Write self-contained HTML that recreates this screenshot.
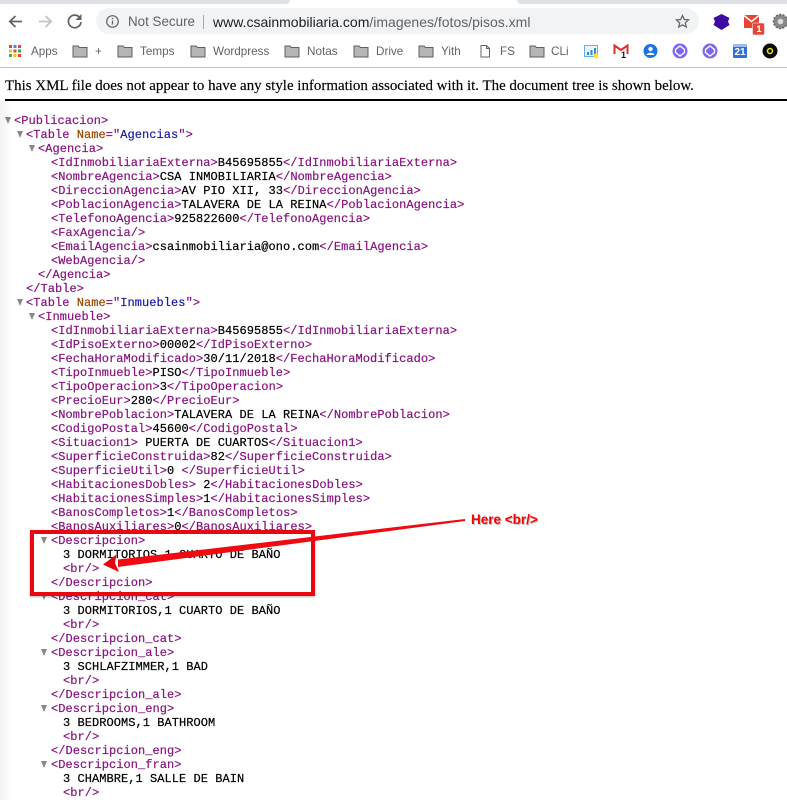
<!DOCTYPE html>
<html><head><meta charset="utf-8">
<style>
html,body{margin:0;padding:0;background:#fff}
#r{position:relative;width:787px;height:800px;overflow:hidden;background:#fff}
.a{position:absolute}
.u{font:13.4px/18px "Liberation Sans",sans-serif;white-space:nowrap}
.b{position:absolute;top:44px;font:11.7px/16px "Liberation Sans",sans-serif;color:#5f6368;white-space:nowrap}
.x{position:absolute;left:0;margin-top:1px;font:12px/14px "Liberation Mono",monospace;letter-spacing:.05px;-webkit-text-stroke:.2px;color:#881280;white-space:pre;height:14px}
.x b{font-weight:normal;color:#000}
.x i{font-style:normal;color:#994500}
.x u{text-decoration:none;color:#1a1aa6}
.t{position:absolute;width:0;height:0;border-left:3.5px solid transparent;border-right:3.5px solid transparent;border-top:7px solid #888}
svg{position:absolute;overflow:visible}
</style></head><body><div id="r">
<div class="a" style="left:0;top:100px;width:12px;height:700px;background:linear-gradient(90deg,#f3f3f3,#fff)"></div>
<div class="a" style="left:0;top:0;width:290px;height:4px;background:#dee1e6;border-radius:0 0 6px 0"></div>
<div class="a" style="left:517px;top:0;width:270px;height:4px;background:#dee1e6;border-radius:0 0 0 6px"></div>
<div class="a" style="left:96px;top:8px;width:603px;height:26px;border-radius:13px;background:#f1f3f4"></div>
<svg style="left:0;top:0" width="787" height="70" fill="none">
<path d="M22 21.500H10M15.500 16 9.800 21.500l5.700 5.500" stroke="#5f6368" stroke-width="1.700"/>
<path d="M39 21.500h12M45.500 16 51.200 21.500l-5.700 5.500" stroke="#bfc2c6" stroke-width="1.700"/>
<path d="M80 18a6.300 6.300 0 1 0 1 4" stroke="#5f6368" stroke-width="1.700"/><path d="M81.500 14v6h-6z" fill="#5f6368"/>
<circle cx="112.500" cy="21.500" r="5.800" stroke="#5f6368" stroke-width="1.200"/><path d="M112.500 20.500v4M112.500 18v1.300" stroke="#5f6368" stroke-width="1.300"/>
<path d="M682.500 15.500l1.800 4 4.300.4-3.300 2.900 1 4.200-3.800-2.200-3.800 2.200 1-4.200-3.300-2.900 4.300-.4z" stroke="#5f6368" stroke-width="1.200"/>
<path d="M721.500 14l8 4-1.500 3.500 1.500 3.500-8 5-8-5 1.500-3.500-1.500-3.500z" fill="#3a0ca3"/>
<path d="M744 15h15v13h-15z" fill="#ea4335"/><path d="M744 15.500l7.500 6 7.500-6" stroke="#fff" stroke-width="1.500"/>
<rect x="752.500" y="23" width="12" height="12" rx="1.500" fill="#e0483c" stroke="#fff" stroke-width=".5"/>
<circle cx="780.500" cy="21.500" r="7" fill="#8a8a8a"/><circle cx="780.500" cy="21.500" r="7" stroke="#666" stroke-width="1.500" stroke-dasharray="2 1.500"/><circle cx="780.500" cy="21.500" r="2.800" fill="#ddd"/>
<rect x="9" y="45" width="3" height="3" fill="#ea4335"/><rect x="18" y="45" width="3" height="3" fill="#ea4335"/>
<rect x="13.500" y="45" width="3" height="3" fill="#4285f4"/>
<rect x="9" y="49.500" width="3" height="3" fill="#fbbc05"/><rect x="13.500" y="49.500" width="3" height="3" fill="#ea4335"/><rect x="18" y="49.500" width="3" height="3" fill="#34a853"/>
<rect x="9" y="54" width="3" height="3" fill="#34a853"/><rect x="13.500" y="54" width="3" height="3" fill="#fbbc05"/><rect x="18" y="54" width="3" height="3" fill="#ea4335"/>
<g fill="#b5b5b5" stroke="#5f5f5f" stroke-width="1">
<path d="M73 46h5l1.500 1.500H87v9.500H73z"/><path d="M118 46h5l1.500 1.500H132v9.500h-14z"/><path d="M191 46h5l1.500 1.500H205v9.500h-14z"/><path d="M285 46h5l1.500 1.500H299v9.500h-14z"/><path d="M354 46h5l1.500 1.500H368v9.500h-14z"/><path d="M419 46h5l1.500 1.500H433v9.500h-14z"/><path d="M530 46h5l1.500 1.500H544v9.500h-14z"/>
</g>
<path d="M481 45.500h5.500l3 3v8.500H481zM486.500 45.500v3h3" stroke="#5f6368" stroke-width="1" fill="#fff"/>
<rect x="584.500" y="45.500" width="13" height="11" fill="#eaf5fd" stroke="#5db3ea"/><path d="M587 55v-3h2v3zM590.500 55v-5h2v5zM594 55v-7h2v7z" fill="#2a8fd8"/><circle cx="596" cy="56" r="2.500" fill="#fde030"/>
<path d="M614.500 54V45.500L621 50l6.500-4.500V54" stroke="#d93025" stroke-width="2"/>
<circle cx="650.500" cy="51" r="7" fill="#1a73e8"/><circle cx="650.500" cy="49" r="2.200" fill="#fff"/><path d="M646.500 55c.5-3 7.500-3 8 0z" fill="#fff"/>
<circle cx="680" cy="51" r="7.500" fill="#7b68ee"/><path d="M680 46l4.500 3.500v3L680 56l-4.500-3.500v-3z" stroke="#fff" stroke-width="1.300"/>
<circle cx="710" cy="51" r="7.500" fill="#7b68ee"/><path d="M710 46l4.500 3.500v3L710 56l-4.500-3.500v-3z" stroke="#fff" stroke-width="1.300"/>
<rect x="733" y="44" width="14" height="14" rx="1" fill="#2f6fd6"/><rect x="733" y="44" width="14" height="3" fill="#9dbcec"/>
<circle cx="770" cy="51" r="7.500" fill="#0a0a0a"/><circle cx="770" cy="51" r="2.500" stroke="#f0e020" stroke-width="1.500"/>
</svg>
<div class="a u" style="left:128px;top:13px;color:#5f6368">Not Secure</div>
<div class="a" style="left:203px;top:15px;width:1px;height:14px;background:#aaa"></div>
<div class="a u" style="left:213px;top:13px;font-size:14px;color:#5f6368"><span style="color:#202124">www.csainmobiliaria.com</span>/imagenes/fotos/pisos.xml</div>
<div class="a" style="left:753px;top:24px;width:12px;font:bold 9px/10px 'Liberation Sans',sans-serif;color:#fff;text-align:center">1</div>
<div class="a" style="left:621px;top:50px;font:bold 9px/10px 'Liberation Sans',sans-serif;color:#111">1</div>
<div class="a" style="left:733px;top:47px;width:14px;font:bold 10px/11px 'Liberation Sans',sans-serif;color:#fff;text-align:center">21</div>
<div class="b" style="left:31px">Apps</div><div class="b" style="left:95px">+</div><div class="b" style="left:140px">Temps</div><div class="b" style="left:213px">Wordpress</div><div class="b" style="left:307px">Notas</div><div class="b" style="left:376px">Drive</div><div class="b" style="left:441px">Yith</div><div class="b" style="left:500px">FS</div><div class="b" style="left:551px">CLi</div>
<div class="a" style="left:0;top:67px;width:787px;height:1px;background:#c4c4c4"></div>
<div class="a" style="left:5px;top:77px;font:14.95px/18px 'Liberation Serif',serif;-webkit-text-stroke:.15px;color:#000;white-space:nowrap">This XML file does not appear to have any style information associated with it. The document tree is shown below.</div>
<div class="a" style="left:5px;top:98.500px;width:782px;height:2px;background:#000"></div>

<div class="t" style="left:5px;top:117px"></div><div class="t" style="left:17px;top:131px"></div><div class="t" style="left:29px;top:145px"></div><div class="t" style="left:17px;top:299px"></div><div class="t" style="left:29px;top:313px"></div><div class="t" style="left:41px;top:537px"></div><div class="t" style="left:41px;top:593px"></div><div class="t" style="left:41px;top:649px"></div><div class="t" style="left:41px;top:705px"></div><div class="t" style="left:41px;top:761px"></div>

<div class="x" style="top:113px;left:14px">&lt;Publicacion&gt;</div>
<div class="x" style="top:127px;left:26px">&lt;Table <i>Name</i>="<u>Agencias</u>"&gt;</div>
<div class="x" style="top:141px;left:38px">&lt;Agencia&gt;</div>
<div class="x" style="top:155px;left:51px">&lt;IdInmobiliariaExterna&gt;<b>B45695855</b>&lt;/IdInmobiliariaExterna&gt;</div>
<div class="x" style="top:169px;left:51px">&lt;NombreAgencia&gt;<b>CSA INMOBILIARIA</b>&lt;/NombreAgencia&gt;</div>
<div class="x" style="top:183px;left:51px">&lt;DireccionAgencia&gt;<b>AV PIO XII, 33</b>&lt;/DireccionAgencia&gt;</div>
<div class="x" style="top:197px;left:51px">&lt;PoblacionAgencia&gt;<b>TALAVERA DE LA REINA</b>&lt;/PoblacionAgencia&gt;</div>
<div class="x" style="top:211px;left:51px">&lt;TelefonoAgencia&gt;<b>925822600</b>&lt;/TelefonoAgencia&gt;</div>
<div class="x" style="top:225px;left:51px">&lt;FaxAgencia/&gt;</div>
<div class="x" style="top:239px;left:51px">&lt;EmailAgencia&gt;<b>csainmobiliaria@ono.com</b>&lt;/EmailAgencia&gt;</div>
<div class="x" style="top:253px;left:51px">&lt;WebAgencia/&gt;</div>
<div class="x" style="top:267px;left:38px">&lt;/Agencia&gt;</div>
<div class="x" style="top:281px;left:26px">&lt;/Table&gt;</div>
<div class="x" style="top:295px;left:26px">&lt;Table <i>Name</i>="<u>Inmuebles</u>"&gt;</div>
<div class="x" style="top:309px;left:38px">&lt;Inmueble&gt;</div>
<div class="x" style="top:323px;left:51px">&lt;IdInmobiliariaExterna&gt;<b>B45695855</b>&lt;/IdInmobiliariaExterna&gt;</div>
<div class="x" style="top:337px;left:51px">&lt;IdPisoExterno&gt;<b>00002</b>&lt;/IdPisoExterno&gt;</div>
<div class="x" style="top:351px;left:51px">&lt;FechaHoraModificado&gt;<b>30/11/2018</b>&lt;/FechaHoraModificado&gt;</div>
<div class="x" style="top:365px;left:51px">&lt;TipoInmueble&gt;<b>PISO</b>&lt;/TipoInmueble&gt;</div>
<div class="x" style="top:379px;left:51px">&lt;TipoOperacion&gt;<b>3</b>&lt;/TipoOperacion&gt;</div>
<div class="x" style="top:393px;left:51px">&lt;PrecioEur&gt;<b>280</b>&lt;/PrecioEur&gt;</div>
<div class="x" style="top:407px;left:51px">&lt;NombrePoblacion&gt;<b>TALAVERA DE LA REINA</b>&lt;/NombrePoblacion&gt;</div>
<div class="x" style="top:421px;left:51px">&lt;CodigoPostal&gt;<b>45600</b>&lt;/CodigoPostal&gt;</div>
<div class="x" style="top:435px;left:51px">&lt;Situacion1&gt;<b> PUERTA DE CUARTOS</b>&lt;/Situacion1&gt;</div>
<div class="x" style="top:449px;left:51px">&lt;SuperficieConstruida&gt;<b>82</b>&lt;/SuperficieConstruida&gt;</div>
<div class="x" style="top:463px;left:51px">&lt;SuperficieUtil&gt;<b>0 </b>&lt;/SuperficieUtil&gt;</div>
<div class="x" style="top:477px;left:51px">&lt;HabitacionesDobles&gt;<b> 2</b>&lt;/HabitacionesDobles&gt;</div>
<div class="x" style="top:491px;left:51px">&lt;HabitacionesSimples&gt;<b>1</b>&lt;/HabitacionesSimples&gt;</div>
<div class="x" style="top:505px;left:51px">&lt;BanosCompletos&gt;<b>1</b>&lt;/BanosCompletos&gt;</div>
<div class="x" style="top:519px;left:51px">&lt;BanosAuxiliares&gt;<b>0</b>&lt;/BanosAuxiliares&gt;</div>
<div class="x" style="top:533px;left:51px">&lt;Descripcion&gt;</div>
<div class="x" style="top:547px;left:63px"><b>3 DORMITORIOS,1 CUARTO DE BAÑO</b></div>
<div class="x" style="top:561px;left:63px">&lt;br/&gt;</div>
<div class="x" style="top:575px;left:51px">&lt;/Descripcion&gt;</div>
<div class="x" style="top:589px;left:51px">&lt;Descripcion_cat&gt;</div>
<div class="x" style="top:603px;left:63px"><b>3 DORMITORIOS,1 CUARTO DE BAÑO</b></div>
<div class="x" style="top:617px;left:63px">&lt;br/&gt;</div>
<div class="x" style="top:631px;left:51px">&lt;/Descripcion_cat&gt;</div>
<div class="x" style="top:645px;left:51px">&lt;Descripcion_ale&gt;</div>
<div class="x" style="top:659px;left:63px"><b>3 SCHLAFZIMMER,1 BAD</b></div>
<div class="x" style="top:673px;left:63px">&lt;br/&gt;</div>
<div class="x" style="top:687px;left:51px">&lt;/Descripcion_ale&gt;</div>
<div class="x" style="top:701px;left:51px">&lt;Descripcion_eng&gt;</div>
<div class="x" style="top:715px;left:63px"><b>3 BEDROOMS,1 BATHROOM</b></div>
<div class="x" style="top:729px;left:63px">&lt;br/&gt;</div>
<div class="x" style="top:743px;left:51px">&lt;/Descripcion_eng&gt;</div>
<div class="x" style="top:757px;left:51px">&lt;Descripcion_fran&gt;</div>
<div class="x" style="top:771px;left:63px"><b>3 CHAMBRE,1 SALLE DE BAIN</b></div>
<div class="x" style="top:785px;left:63px">&lt;br/&gt;</div>

<div class="a" style="left:30px;top:530px;width:277px;height:58px;border:4px solid #e8060f;box-shadow:0 1px 2px rgba(0,0,0,.3)"></div>
<svg style="left:0;top:0" width="787" height="800">
<path d="M465 519 465 521 118 567 118 559.500z" fill="#ee0a10"/>
<path d="M103 564.500 116.500 554.500 115 563 119 572z" fill="#e4060e"/>
</svg>
<div class="a" style="left:471px;top:512px;font:bold 13.500px/16px 'Liberation Sans',sans-serif;color:#f00;text-shadow:1px 1px 0 #bbb;white-space:nowrap">Here &lt;br/&gt;</div>
</div></body></html>
